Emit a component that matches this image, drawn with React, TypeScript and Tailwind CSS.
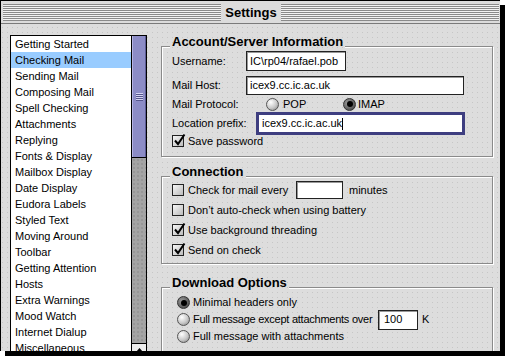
const panes = [
  'Getting Started',
  'Checking Mail',
  'Sending Mail',
  'Composing Mail',
  'Spell Checking',
  'Attachments',
  'Replying',
  'Fonts & Display',
  'Mailbox Display',
  'Date Display',
  'Eudora Labels',
  'Styled Text',
  'Moving Around',
  'Toolbar',
  'Getting Attention',
  'Hosts',
  'Extra Warnings',
  'Mood Watch',
  'Internet Dialup',
  'Miscellaneous',
];

const dots =
  'bg-[#dddddd] bg-[radial-gradient(circle,#c6c6c6_0.6px,transparent_0.9px)] bg-[length:5px_5px] bg-fixed';

function Check({ on }: { on?: boolean }) {
  return (
    <span className="relative w-[12px] h-[12px] shrink-0 border border-[#222] bg-[linear-gradient(135deg,#f6f6f6,#bcbcbc)]">
      {on && (
        <svg className="absolute -top-[3px] -left-[1px]" width="14" height="14" viewBox="0 0 14 14">
          <path d="M3 7.5 L6 11 L12.5 1.5" stroke="#000" strokeWidth="2" fill="none" />
        </svg>
      )}
    </span>
  );
}

function Radio({ on }: { on?: boolean }) {
  return (
    <span
      className={
        on
          ? 'w-[13px] h-[13px] shrink-0 rounded-full border border-[#333] flex items-center justify-center bg-[radial-gradient(circle_at_35%_35%,#9a9a9a,#3a3a3a)]'
          : 'w-[13px] h-[13px] shrink-0 rounded-full border border-[#555] bg-[radial-gradient(circle_at_35%_30%,#ffffff,#c8c8c8_55%,#7e7e7e)]'
      }
    >
      {on && <span className="w-[6px] h-[6px] rounded-full bg-black" />}
    </span>
  );
}

function Field({ w, h, text, pl = 'pl-[3px]' }: { w: string; h: string; text?: string; pl?: string }) {
  return (
    <div className={`${w} ${h} shrink-0 bg-white border border-[#222] shadow-[inset_1px_1px_0_#999] flex items-center ${pl}`}>
      {text}
    </div>
  );
}

function Group({ title, className, children }: { title: string; className: string; children: React.ReactNode }) {
  return (
    <div className={`relative w-[332px] shrink-0 border border-[#8a8a8a] shadow-[1px_1px_0_#fff,inset_1px_1px_0_#fff] ${className}`}>
      <span className={`absolute -top-[13px] left-[8px] px-[2px] text-[13px] leading-[15px] font-bold ${dots}`}>
        {title}
      </span>
      {children}
    </div>
  );
}

export default function App() {
  return (
    <div className="w-[505px] h-[356px] bg-white overflow-hidden font-['Liberation_Sans',Arial,sans-serif] text-[11px] text-black">
      <div className={`w-[500px] h-[351px] flex flex-col overflow-hidden border-l border-t border-black shadow-[5px_5px_0_#000] ${dots}`}>
        {/* title bar */}
        <div className="h-[23px] shrink-0 bg-[#dcdcdc] border-b border-[#7a7a7a] flex items-center pl-[2px] pr-[1px] gap-[4px]">
          <div className="flex-1 h-[17px] bg-[repeating-linear-gradient(to_bottom,#8a8a8a_0_1px,#f2f2f2_1px_2px)]" />
          <span className="font-bold text-[13px] leading-none">Settings</span>
          <div className="flex-1 h-[17px] bg-[repeating-linear-gradient(to_bottom,#8a8a8a_0_1px,#f2f2f2_1px_2px)]" />
        </div>

        <div className="flex pl-[9px] pt-[11px]">
          {/* pane list */}
          <div className="w-[137px] h-[326px] shrink-0 flex border border-black">
            <div className="flex-1 bg-white">
              {panes.map((p) => (
                <div
                  key={p}
                  className={`h-[16px] leading-[16px] pl-[4px] whitespace-nowrap ${p === 'Checking Mail' ? 'bg-[#99ccff]' : ''}`}
                >
                  {p}
                </div>
              ))}
            </div>
            <div className="w-[15px] border-l border-black flex flex-col">
              <div className="h-[121px] bg-[#8c8cc6] border-l border-[#b4b4e4] border-r border-r-[#5c5c96] flex items-center justify-center">
                <svg width="7" height="8" viewBox="0 0 7 8">
                  <path d="M0 0.5h7M0 2.5h7M0 4.5h7M0 6.5h7" stroke="#d4d4f2" strokeWidth="1" />
                  <path d="M0 1.5h7M0 3.5h7M0 5.5h7M0 7.5h7" stroke="#55558c" strokeWidth="1" />
                </svg>
              </div>
              <div className="h-[186px] border-t border-black bg-[#a4a4a4] bg-[radial-gradient(circle,#8e8e8e_0.6px,transparent_0.9px)] bg-[length:4px_4px]" />
              <div className="h-[16px] border-t border-black bg-[#eeeeee] flex justify-center pt-[4px]">
                <svg width="7" height="4" viewBox="0 0 7 4">
                  <path d="M0 4 L3.5 0 L7 4 Z" fill="#000" />
                </svg>
              </div>
            </div>
          </div>

          {/* settings */}
          <div className="ml-[14px] flex flex-col">
            <Group title="Account/Server Information" className="mt-[11px] h-[111px] pl-[10px] pt-[4px] flex flex-col">
              <div className="h-[20px] flex items-center">
                <span className="w-[74px]">Username:</span>
                <Field w="w-[100px]" h="h-[20px]" text="IC\rp04/rafael.pob" />
              </div>
              <div className="mt-[5px] h-[19px] flex items-center">
                <span className="w-[74px]">Mail Host:</span>
                <Field w="w-[218px]" h="h-[19px]" text="icex9.cc.ic.ac.uk" />
              </div>
              <div className="mt-[1px] h-[16px] flex items-center">
                <span className="w-[94px]">Mail Protocol:</span>
                <div className="w-[77px] flex items-center">
                  <Radio />
                  <span className="ml-[4px]">POP</span>
                </div>
                <Radio on />
                <span className="ml-[2px]">IMAP</span>
              </div>
              <div className="h-[23px] flex items-center">
                <span className="w-[84px]">Location prefix:</span>
                <div className="w-[209px] h-[23px] bg-white border-[3px] border-[#3e3e80] flex items-center pl-[3px]">
                  <span>icex9.cc.ic.ac.uk</span>
                  <span className="w-px h-[12px] bg-black" />
                </div>
              </div>
              <div className="h-[12px] flex items-center">
                <Check on />
                <span className="ml-[4px]">Save password</span>
              </div>
            </Group>

            <Group title="Connection" className="mt-[19px] h-[88px] pl-[10px] pt-[4px] flex flex-col gap-[2px]">
              <div className="h-[18px] flex items-center">
                <Check />
                <span className="ml-[4px] w-[108px]">Check for mail every</span>
                <Field w="w-[47px]" h="h-[18px]" />
                <span className="ml-[6px]">minutes</span>
              </div>
              <div className="h-[18px] flex items-center">
                <Check />
                <span className="ml-[4px]">Don’t auto-check when using battery</span>
              </div>
              <div className="h-[18px] flex items-center">
                <Check on />
                <span className="ml-[4px]">Use background threading</span>
              </div>
              <div className="h-[18px] flex items-center">
                <Check on />
                <span className="ml-[4px]">Send on check</span>
              </div>
            </Group>

            <Group title="Download Options" className="mt-[23px] h-[80px] pl-[15px] pt-[6px] flex flex-col">
              <div className="h-[17px] flex items-center">
                <Radio on />
                <span className="ml-[3px]">Minimal headers only</span>
              </div>
              <div className="h-[17px] flex items-center">
                <Radio />
                <span className="ml-[3px] w-[185px] whitespace-nowrap tracking-[-0.25px]">Full message except attachments over</span>
                <Field w="w-[40px]" h="h-[20px]" text="100" pl="pl-[5px]" />
                <span className="ml-[4px]">K</span>
              </div>
              <div className="h-[17px] flex items-center">
                <Radio />
                <span className="ml-[3px]">Full message with attachments</span>
              </div>
            </Group>
          </div>
        </div>
      </div>
    </div>
  );
}
